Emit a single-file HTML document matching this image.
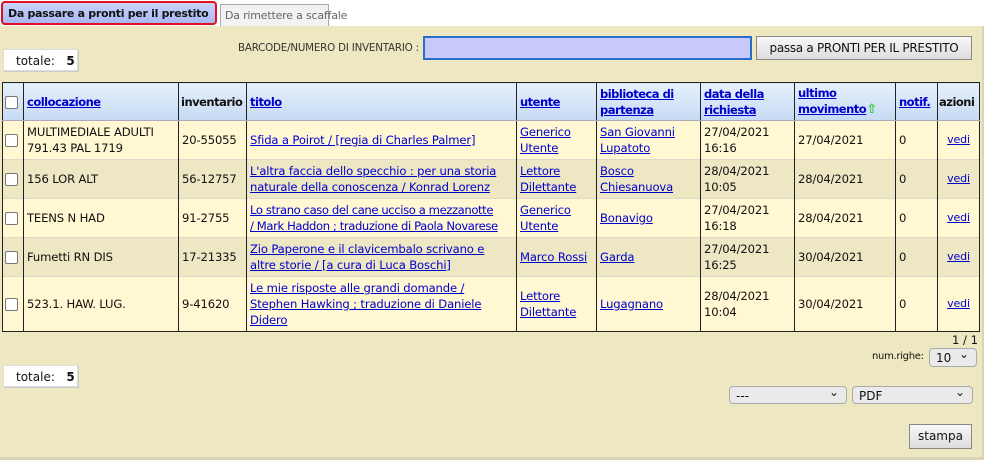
<!DOCTYPE html>
<html><head><style>
body{margin:0;width:984px;height:460px;background:#fff;font-family:"DejaVu Sans","Liberation Sans",sans-serif;font-size:11.6px;color:#111;position:relative;overflow:hidden}
.abs{position:absolute;white-space:nowrap}
.tab1{left:1px;top:1px;width:216px;height:24px;border:2px solid #e01020;border-radius:4px;background:linear-gradient(#c8d4fb,#a9b8f5);font-weight:bold;font-size:11px;letter-spacing:-0.3px;line-height:21px;box-sizing:border-box;padding-left:5px;overflow:hidden}
.tab2{left:220px;top:4px;width:109px;height:22px;border:1px solid #aaa;border-bottom:none;background:#f2f2f2;color:#666;line-height:21px;padding-left:4px;box-sizing:border-box;font-size:11px;letter-spacing:-0.2px}
.panel{left:0;top:26px;width:982px;height:431px;background:#eee8c2;border-right:2px solid #d9d4b4;border-bottom:3px solid #d9d4b4}
.tot{background:#fff;border:1px solid #ddd;box-shadow:1px 1px 0 #ccc;height:22px;line-height:22px;font-size:12px}
table{position:absolute;left:2px;top:82px;border-collapse:collapse;table-layout:fixed;width:977px}
td,th{border-left:1px solid #222;border-right:1px solid #222;padding:0 3px;text-align:left;vertical-align:middle;line-height:16px;overflow:hidden;white-space:nowrap}
th{background:linear-gradient(#e6f0fc,#c6daf4);height:37px;font-weight:bold;border-top:1px solid #222;border-bottom:1px solid #aab;font-size:11.5px;letter-spacing:-0.5px}
tr.a td{background:#fff8d2}
tr.b td{background:#ede7c4}
td{border-bottom:1px dotted #ccc;height:38px;letter-spacing:-0.15px}
a{color:#00c;text-decoration:underline}
.cb{display:inline-block;width:11px;height:11px;border:1px solid #777;border-radius:2px;background:#fff;vertical-align:middle}
.sel{border:1px solid #aaa;border-radius:4px;background:#eaeaea;height:18px;line-height:18px;box-sizing:border-box;padding-left:6px;font-size:12px}
.sel:after{content:"⌄";position:absolute;right:7px;top:-4px;font-size:12px}
.btn{border:1px solid #888;background:linear-gradient(#f8f8f8,#ddd);text-align:center;font-size:12px;box-sizing:border-box}
</style></head><body>
<div class="abs panel"></div>
<div class="abs tab1">Da passare a pronti per il prestito</div>
<div class="abs tab2">Da rimettere a scaffale</div>
<div class="abs tot" style="left:3px;top:49px;width:75px;padding-left:12px;box-sizing:border-box">totale:&nbsp;&nbsp; <b>5</b></div>
<div class="abs" style="left:238px;top:42px;font-size:10.3px;color:#333;letter-spacing:-0.2px">BARCODE/NUMERO DI INVENTARIO&nbsp;:</div>
<div class="abs" style="left:423px;top:36px;width:329px;height:24px;background:#c8c8fa;border:2px solid #2a6cc8;box-sizing:border-box"></div>
<div class="abs btn" style="left:756px;top:36px;width:216px;height:24px;line-height:22px;letter-spacing:-0.3px">passa a PRONTI PER IL PRESTITO</div>
<table>
<colgroup><col style="width:21px"><col style="width:155px"><col style="width:68px"><col style="width:270px"><col style="width:80px"><col style="width:104px"><col style="width:94px"><col style="width:101px"><col style="width:42px"><col style="width:42px"></colgroup>
<tr><th style="padding:0 2px"><span class="cb"></span></th><th><a>collocazione</a></th><th style="padding:0 2px">inventario</th><th><a>titolo</a></th><th><a>utente</a></th><th><a>biblioteca di<br>partenza</a></th><th><a>data della<br>richiesta</a></th><th><a>ultimo<br>movimento</a><span style="color:#3c3;font-size:13px">⇧</span></th><th><a>notif.</a></th><th style="padding:0 1px">azioni</th></tr>
<tr class="a"><td style="padding:0 2px"><span class="cb"></span></td><td>MULTIMEDIALE ADULTI<br>791.43 PAL 1719</td><td>20-55055</td><td><a>Sfida a Poirot / [regia di Charles Palmer]</a></td><td><a>Generico<br>Utente</a></td><td><a>San Giovanni<br>Lupatoto</a></td><td>27/04/2021<br>16:16</td><td>27/04/2021</td><td>0</td><td style="text-align:center;font-size:11px"><a>vedi</a></td></tr>
<tr class="b"><td style="padding:0 2px"><span class="cb"></span></td><td>156 LOR ALT</td><td>56-12757</td><td><a>L'altra faccia dello specchio : per una storia<br>naturale della conoscenza / Konrad Lorenz</a></td><td><a>Lettore<br>Dilettante</a></td><td><a>Bosco<br>Chiesanuova</a></td><td>28/04/2021<br>10:05</td><td>28/04/2021</td><td>0</td><td style="text-align:center;font-size:11px"><a>vedi</a></td></tr>
<tr class="a"><td style="padding:0 2px"><span class="cb"></span></td><td>TEENS N HAD</td><td>91-2755</td><td style="letter-spacing:-0.4px"><a>Lo strano caso del cane ucciso a mezzanotte<br>/ Mark Haddon ; traduzione di Paola Novarese</a></td><td><a>Generico<br>Utente</a></td><td><a>Bonavigo</a></td><td>27/04/2021<br>16:18</td><td>28/04/2021</td><td>0</td><td style="text-align:center;font-size:11px"><a>vedi</a></td></tr>
<tr class="b"><td style="padding:0 2px"><span class="cb"></span></td><td>Fumetti RN DIS</td><td>17-21335</td><td><a>Zio Paperone e il clavicembalo scrivano e<br>altre storie / [a cura di Luca Boschi]</a></td><td><a>Marco Rossi</a></td><td><a>Garda</a></td><td>27/04/2021<br>16:25</td><td>30/04/2021</td><td>0</td><td style="text-align:center;font-size:11px"><a>vedi</a></td></tr>
<tr class="a"><td style="padding:0 2px;height:54px;border-bottom:1px solid #222"><span class="cb"></span></td><td style="border-bottom:1px solid #222">523.1. HAW. LUG.</td><td style="border-bottom:1px solid #222">9-41620</td><td style="border-bottom:1px solid #222"><a>Le mie risposte alle grandi domande /<br>Stephen Hawking ; traduzione di Daniele<br>Didero</a></td><td style="border-bottom:1px solid #222"><a>Lettore<br>Dilettante</a></td><td style="border-bottom:1px solid #222"><a>Lugagnano</a></td><td style="border-bottom:1px solid #222">28/04/2021<br>10:04</td><td style="border-bottom:1px solid #222">30/04/2021</td><td style="border-bottom:1px solid #222">0</td><td style="text-align:center;font-size:11px;border-bottom:1px solid #222"><a>vedi</a></td></tr>
</table>
<div class="abs" style="right:6px;top:333px">1 / 1</div>
<div class="abs" style="left:872px;top:351px;font-size:10px;letter-spacing:-0.3px">num.righe:</div>
<div class="abs sel" style="left:929px;top:348px;width:48px;height:19px">10</div>
<div class="abs tot" style="left:3px;top:365px;width:75px;padding-left:12px;box-sizing:border-box">totale:&nbsp;&nbsp; <b>5</b></div>
<div class="abs sel" style="left:729px;top:386px;width:118px">---</div>
<div class="abs sel" style="left:852px;top:386px;width:121px">PDF</div>
<div class="abs btn" style="left:909px;top:424px;width:63px;height:25px;line-height:23px">stampa</div>
</body></html>
